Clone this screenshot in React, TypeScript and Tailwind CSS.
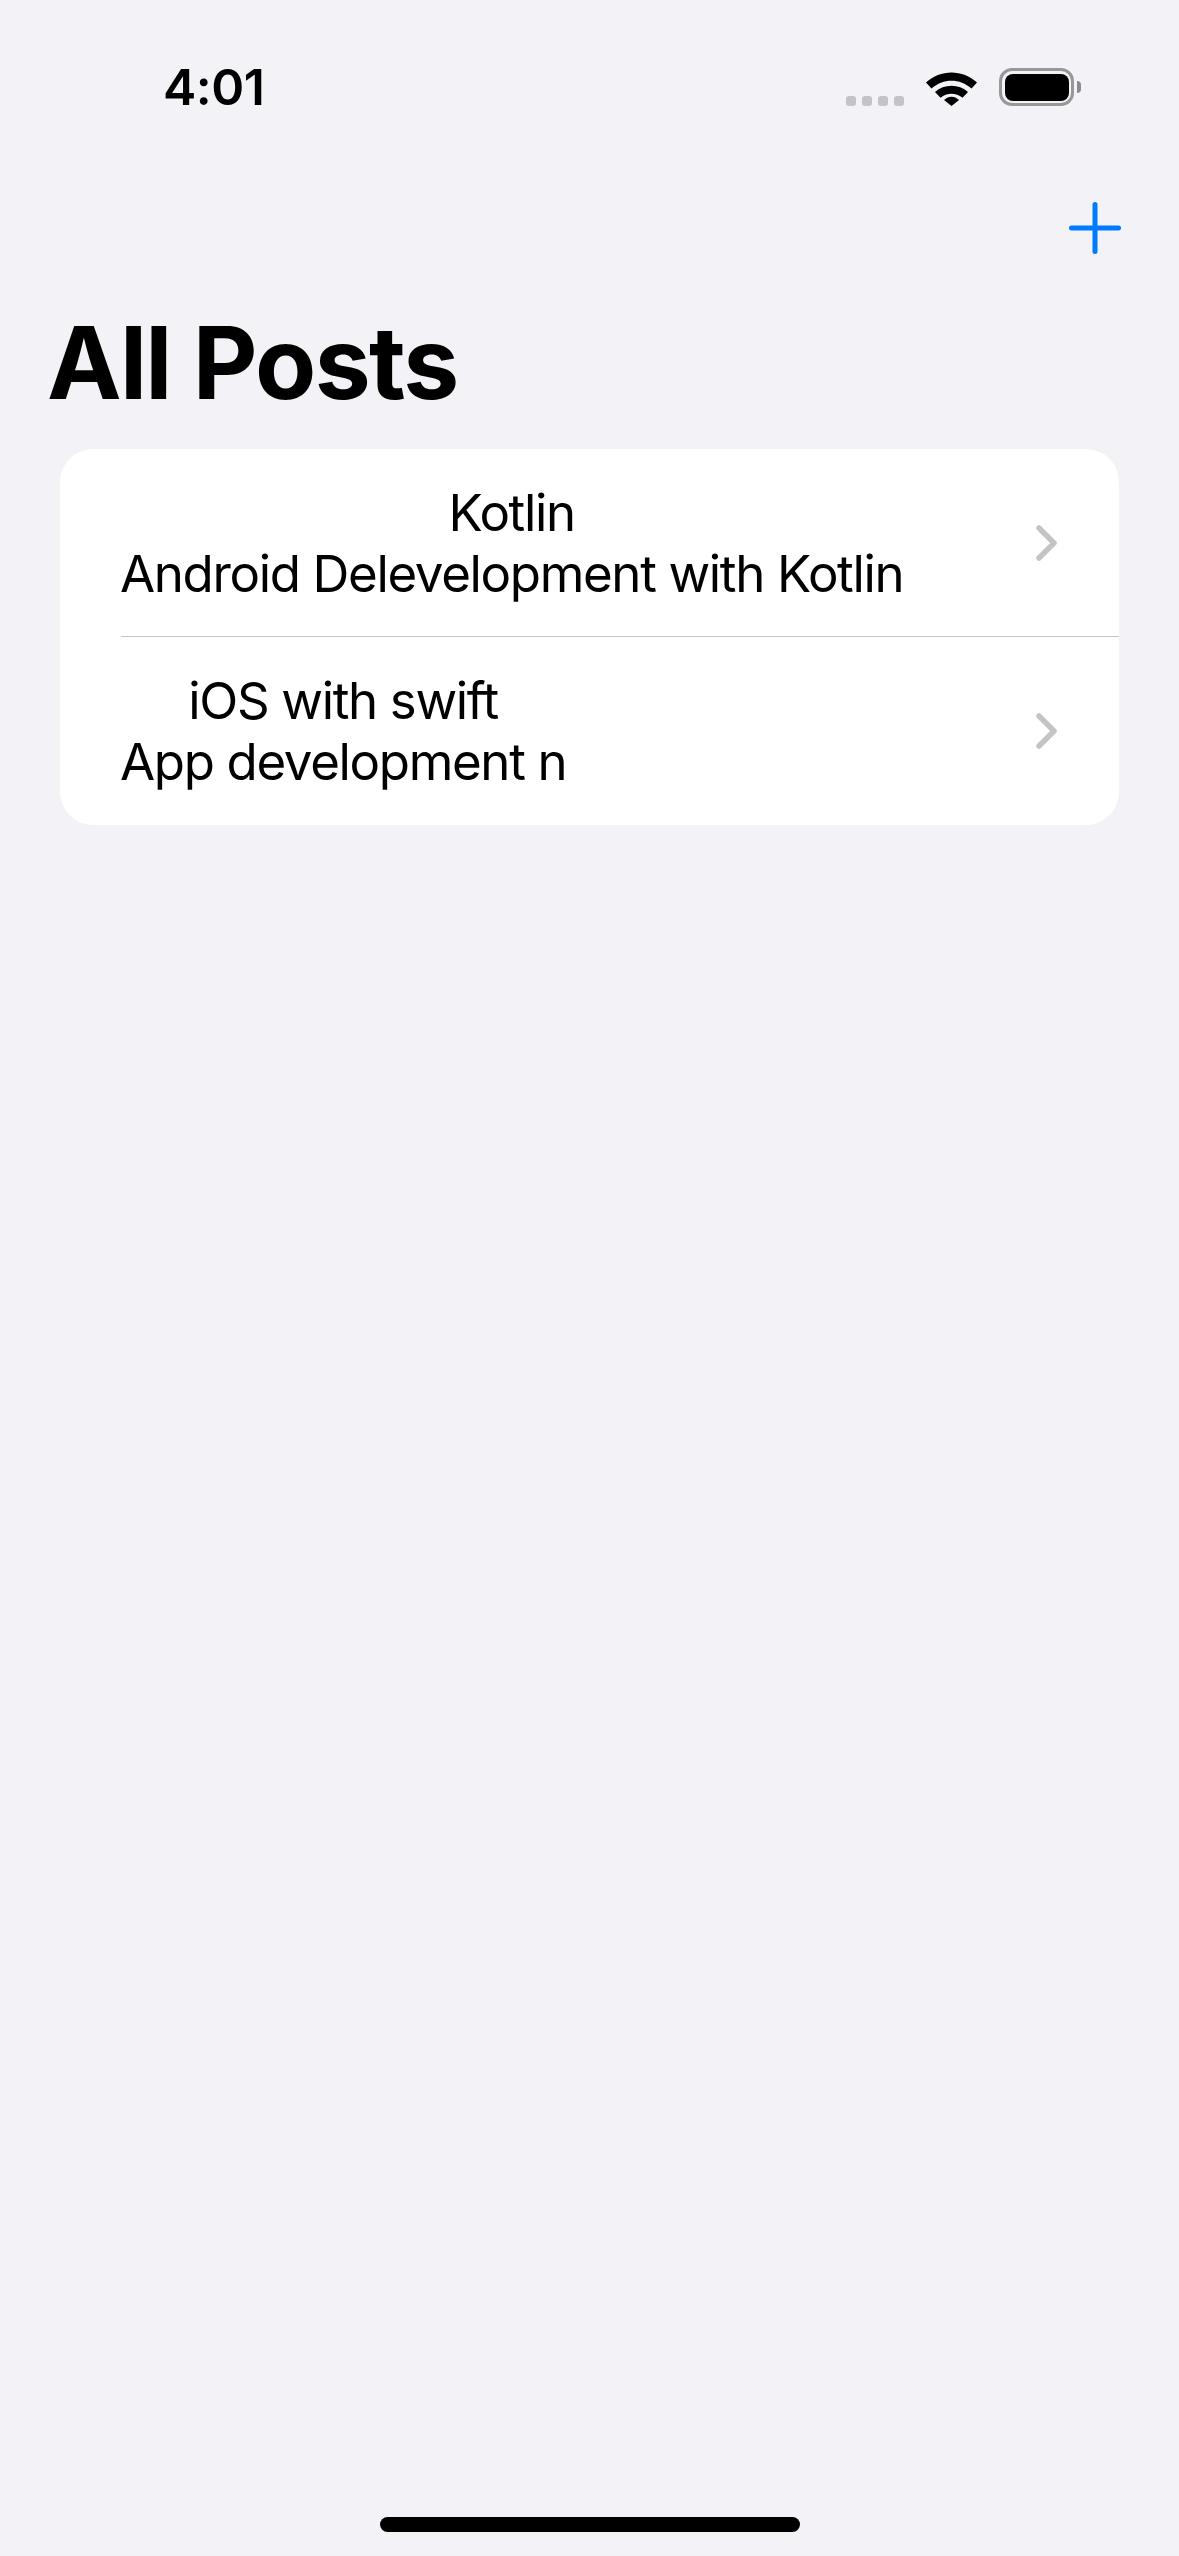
const posts = [
  { title: 'Kotlin', body: 'Android Delevelopment with Kotlin' },
  { title: 'iOS with swift', body: 'App development n' },
];

function StatusBar() {
  return (
    <div className="flex h-[106px] items-end pl-[163px] pr-[98px]">
      <div className="text-[50px] leading-[38px] font-semibold tracking-[-0.5px] text-black">4:01</div>
      <div className="ml-auto flex items-end">
        <div className="flex gap-[6px]">
          {[0, 1, 2, 3].map((i) => (
            <div key={i} className="h-[10px] w-[10px] rounded-[3px] bg-[#c4c4c8]" />
          ))}
        </div>
        <svg className="ml-[22px]" width="51" height="38" viewBox="0 0 51 38">
          <path d="M0 14.5 C14 1 37 1 51 14.5 L45.5 20.5 C34 10 17 10 5.5 20.5 Z" fill="#000" />
          <path d="M9 24 C18 15.5 33 15.5 42 24 L36.5 29.8 C30 24.5 21 24.5 14.5 29.8 Z" fill="#000" />
          <path d="M18 32 C22.5 27.5 28.5 27.5 33 32 L25.5 38 Z" fill="#000" />
        </svg>
        <div className="ml-[22px] flex items-center">
          <div className="flex h-[38px] w-[75px] items-center justify-center rounded-[13px] border-[3px] border-[#98989c]">
            <div className="h-[27px] w-[64px] rounded-[8px] bg-black" />
          </div>
          <div className="ml-[3px] h-[12px] w-[4px] rounded-r-full bg-[#8c8c90]" />
        </div>
      </div>
    </div>
  );
}

function PlusIcon() {
  return (
    <svg width="52" height="52" viewBox="0 0 52 52" fill="none" stroke="#007aff" strokeWidth="5" strokeLinecap="round">
      <path d="M26 2.5V49.5M2.5 26H49.5" />
    </svg>
  );
}

function Chevron() {
  return (
    <svg width="21" height="36" viewBox="0 0 21 36" fill="none" stroke="#c4c4c6" strokeWidth="5.5" strokeLinecap="round" strokeLinejoin="round">
      <path d="M3 3L18 18L3 33" />
    </svg>
  );
}

export default function App() {
  return (
    <div className="flex h-[2556px] w-[1179px] flex-col bg-[#f2f2f7] font-['Inter',sans-serif]">
      <StatusBar />

      {/* Nav bar */}
      <div className="mt-[96px] flex justify-end pr-[58px]">
        <PlusIcon />
      </div>
      <h1 className="mt-[49px] pl-[47px] text-[100px] leading-[120px] font-bold tracking-[-1.7px] text-black">
        All Posts
      </h1>

      {/* List */}
      <div className="mx-[60px] mt-[26px] rounded-[33px] bg-white">
        {posts.map((post, idx) => (
          <div key={post.title} className="pl-[61px]">
            <div className={`flex items-center pr-[62px] ${idx === 0 ? 'h-[187px]' : 'h-[188px]'}`}>
              <div className="-ml-px flex flex-col items-center text-[51px] leading-[61px] tracking-[-1.35px] text-black">
                <div>{post.title}</div>
                <div>{post.body}</div>
              </div>
              <div className="ml-auto">
                <Chevron />
              </div>
            </div>
            {idx === 0 && <div className="h-px bg-[#c6c6c8]" />}
          </div>
        ))}
      </div>

      {/* Home indicator */}
      <div className="mt-auto mb-[24px] h-[15px] w-[420px] self-center rounded-full bg-black" />
    </div>
  );
}
